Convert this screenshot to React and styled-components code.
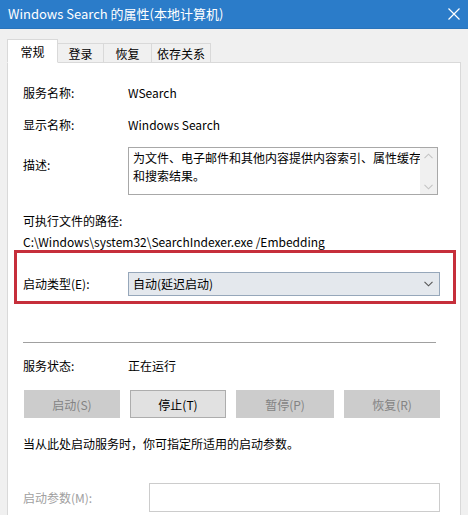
import React from 'react'
import styled, { createGlobalStyle } from 'styled-components'

const Global = createGlobalStyle`
  html, body {
    margin: 0;
    padding: 0;
    background: #f0f0f0;
  }
  * { box-sizing: border-box; }
`

const Window = styled.div`
  width: 468px;
  height: 515px;
  overflow: hidden;
  background: #f0f0f0;
  font-family: "Noto Sans CJK SC", "Microsoft YaHei", sans-serif;
  font-size: 12px;
  color: #000;
  display: flex;
  flex-direction: column;
`

const TitleBar = styled.div`
  height: 29px;
  flex: none;
  background: #2b7cc9;
  color: #fff;
  display: flex;
  align-items: center;
  justify-content: space-between;
  padding: 0 7px 1px 8px;
  font-size: 13px;
  border-bottom: 1px solid #2a74bb;
`

const CloseBtn = styled.div`
  width: 14px;
  height: 14px;
  display: flex;
  align-items: center;
  justify-content: center;
`

const TabStrip = styled.div`
  display: flex;
  align-items: flex-end;
  padding: 10px 0 0 7px;
  height: 34px;
  flex: none;
  position: relative;
  z-index: 1;
  margin-bottom: -1px;
`

const Tab = styled.div`
  height: ${p => (p.$active ? '24px' : '20px')};
  width: ${p => p.$w}px;
  display: flex;
  align-items: center;
  justify-content: center;
  background: ${p => (p.$active ? '#fff' : '#f0f0f0')};
  border: 1px solid #d9d9d9;
  border-bottom: ${p => (p.$active ? '1px solid #fff' : '1px solid #d9d9d9')};
  border-left: ${p => (p.$active || p.$first ? '1px solid #d9d9d9' : 'none')};
  padding-top: ${p => (p.$active ? '0' : '1px')};
`

const Panel = styled.div`
  flex: 1;
  margin: 0 7px;
  background: #fff;
  border: 1px solid #d9d9d9;
  border-bottom: none;
  padding: 17px 20px 0 15px;
  display: flex;
  flex-direction: column;
`

const Row = styled.div`
  display: flex;
  align-items: ${p => p.$align || 'center'};
  height: ${p => (p.$h ? `${p.$h}px` : 'auto')};
  margin-top: ${p => p.$mt || 0}px;
`

const Label = styled.div`
  width: ${p => p.$w || 105}px;
  flex: none;
  color: ${p => (p.$disabled ? '#a0a0a0' : '#000')};
  padding-top: ${p => p.$pt || 0}px;
`

const Value = styled.div`
  white-space: nowrap;
`

const TextLine = styled.div`
  line-height: 16px;
  margin-top: ${p => p.$mt || 0}px;
  white-space: nowrap;
`

const DescBox = styled.div`
  width: 310px;
  height: 48px;
  border: 1px solid #a8a8a8;
  display: flex;
  line-height: 18px;
`

const DescText = styled.div`
  flex: 1;
  padding: 1px 0 0 4px;
  white-space: nowrap;
  overflow: hidden;
`

const ScrollBar = styled.div`
  width: 17px;
  flex: none;
  background: #f0f0f0;
  display: flex;
  flex-direction: column;
  justify-content: space-between;
  align-items: center;
  padding: 5px 0 4px;
`

const HighlightBox = styled.div`
  margin: 0 0 0 -9px;
  width: 442px;
  height: 54px;
  border: 3px solid #c62f3b;
  padding: 13px 0 0 6px;
  display: flex;
  align-items: center;
  align-self: flex-start;
`

const Combo = styled.div`
  width: 312px;
  height: 24px;
  background: #e4e8ed;
  border: 1px solid #96a7ba;
  display: flex;
  align-items: center;
  justify-content: space-between;
  padding: 0 6px 0 4px;
`

const Separator = styled.div`
  margin-top: 38px;
  width: 413px;
  height: 1px;
  background: #a0a0a0;
`

const ButtonRow = styled.div`
  margin: 17px 0 0 1px;
  display: grid;
  grid-template-columns: 96px 96px 98px 96px;
  column-gap: 10px;
  width: 416px;
`

const Button = styled.div`
  height: 28px;
  display: flex;
  align-items: center;
  justify-content: center;
  background: ${p => (p.$disabled ? '#cccccc' : '#e1e1e1')};
  border: 1px solid ${p => (p.$disabled ? '#cccccc' : '#adadad')};
  color: ${p => (p.$disabled ? '#838383' : '#000')};
`

const ParamInput = styled.div`
  width: 291px;
  height: 29px;
  border: 1px solid #cccccc;
  background: #fff;
`

const Chevron = ({ up, color = '#c4c4c4' }) => (
  <svg width="9" height="6" viewBox="0 0 9 6">
    <path
      d={up ? 'M0.5 5.2 L4.5 1.2 L8.5 5.2' : 'M0.5 0.8 L4.5 4.8 L8.5 0.8'}
      fill="none"
      stroke={color}
      strokeWidth="1.1"
    />
  </svg>
)

export default function App() {
  return (
    <>
      <Global />
      <Window>
        <TitleBar>
          <span>Windows Search 的属性(本地计算机)</span>
          <CloseBtn>
            <svg width="12" height="12" viewBox="0 0 12 12">
              <path d="M0.5 0.5 L11.5 11.5 M11.5 0.5 L0.5 11.5" stroke="#fff" strokeWidth="1.2" />
            </svg>
          </CloseBtn>
        </TitleBar>

        <TabStrip>
          <Tab $active $w={51}>常规</Tab>
          <Tab $w={46}>登录</Tab>
          <Tab $w={48}>恢复</Tab>
          <Tab $w={59}>依存关系</Tab>
        </TabStrip>

        <Panel>
          <Row $h={24}>
            <Label>服务名称:</Label>
            <Value>WSearch</Value>
          </Row>
          <Row $h={24} $mt={8}>
            <Label>显示名称:</Label>
            <Value>Windows Search</Value>
          </Row>
          <Row $mt={11} $align="flex-start">
            <Label $pt={9}>描述:</Label>
            <DescBox>
              <DescText>
                为文件、电子邮件和其他内容提供内容索引、属性缓存
                <br />
                和搜索结果。
              </DescText>
              <ScrollBar>
                <Chevron up />
                <Chevron />
              </ScrollBar>
            </DescBox>
          </Row>

          <TextLine $mt={18}>可执行文件的路径:</TextLine>
          <TextLine $mt={5}>C:\Windows\system32\SearchIndexer.exe /Embedding</TextLine>

          <HighlightBox>
            <Label>启动类型(E):</Label>
            <Combo>
              <span>自动(延迟启动)</span>
              <Chevron color="#555" />
            </Combo>
          </HighlightBox>

          <Separator />

          <Row $mt={14} $h={16}>
            <Label>服务状态:</Label>
            <Value>正在运行</Value>
          </Row>

          <ButtonRow>
            <Button $disabled>启动(S)</Button>
            <Button>停止(T)</Button>
            <Button $disabled>暂停(P)</Button>
            <Button $disabled>恢复(R)</Button>
          </ButtonRow>

          <TextLine $mt={18}>当从此处启动服务时，你可指定所适用的启动参数。</TextLine>

          <Row $mt={31}>
            <Label $w={126} $disabled>启动参数(M):</Label>
            <ParamInput />
          </Row>
        </Panel>
      </Window>
    </>
  )
}
